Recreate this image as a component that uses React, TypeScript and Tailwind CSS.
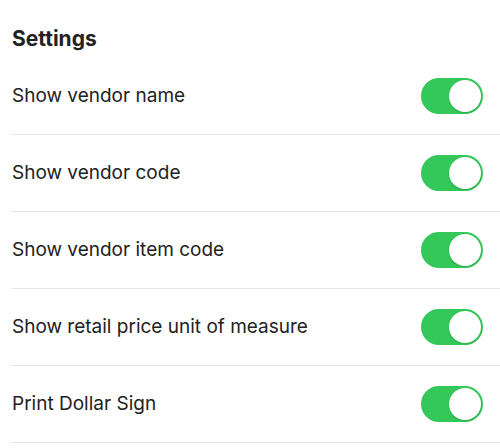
import { useState } from "react";

const rows = [
  "Show vendor name",
  "Show vendor code",
  "Show vendor item code",
  "Show retail price unit of measure",
  "Print Dollar Sign",
];

function Toggle({ on, onClick }: { on: boolean; onClick: () => void }) {
  return (
    <button
      onClick={onClick}
      className={`flex h-[36px] w-[62px] items-center rounded-full p-[2px] ${
        on ? "bg-[#34c759] justify-end" : "bg-[#e5e5ea] justify-start"
      }`}
    >
      <span className="h-[32px] w-[32px] rounded-full bg-white shadow-[0_1px_2px_rgba(0,0,0,0.15)]" />
    </button>
  );
}

export default function App() {
  const [values, setValues] = useState(rows.map(() => true));

  return (
    <div className="min-h-screen bg-white font-['Inter',sans-serif] text-[#222]">
      <h1 className="h-[58px] px-3 pt-[27px] text-[21px] font-bold leading-[24px]">Settings</h1>
      <ul className="pl-[11px]">
        {rows.map((label, i) => (
          <li key={label} className="flex h-[77px] items-center justify-between border-b border-[#e6e6e6] pr-[17px]">
            <span className="pl-px text-[19px]">{label}</span>
            <Toggle
              on={values[i]}
              onClick={() => setValues((v) => v.map((x, j) => (j === i ? !x : x)))}
            />
          </li>
        ))}
      </ul>
    </div>
  );
}
